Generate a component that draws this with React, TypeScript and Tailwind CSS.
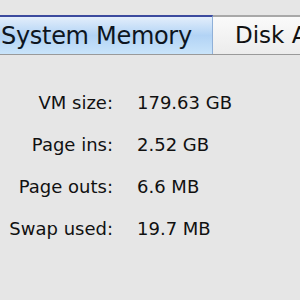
export default function App() {
    const rows = [
        { label: 'VM size:', value: '179.63 GB' },
        { label: 'Page ins:', value: '2.52 GB' },
        { label: 'Page outs:', value: '6.6 MB' },
        { label: 'Swap used:', value: '19.7 MB' },
    ]

    return (
        <div className="w-[300px] h-[300px] overflow-hidden bg-[#e6e6e6] font-['DejaVu_Sans',sans-serif] text-[#111]">
            <div className="pt-[15px]">
                <div className="flex h-[40px] border-b border-[#9a9a9a] whitespace-nowrap overflow-hidden">
                    <div className="w-[213px] shrink-0 flex items-center pl-[1px] border-t-2 border-[#3b4a9e] bg-gradient-to-b from-[#e3eefb] via-[#b2d3f5] to-[#c9e4fa] border-r border-r-[#8fb0d8] text-[24px] tracking-[-0.3px] text-[#0d1520]">
                        System Memory
                    </div>
                    <div className="flex-1 min-w-0 flex items-center pl-[22px] border-t-2 border-[#a8a8a8] bg-gradient-to-b from-[#fafafa] to-[#ececec] text-[23px] text-[#111]">
                        Disk A
                    </div>
                </div>
            </div>
            <div className="mt-[37px] flex flex-col gap-[21px] text-[18px]">
                {rows.map((row) => (
                    <div key={row.label} className="flex h-[21px] items-center whitespace-nowrap">
                        <span className="w-[113px] text-right">{row.label}</span>
                        <span className="ml-[24px]">{row.value}</span>
                    </div>
                ))}
            </div>
        </div>
    )
}
